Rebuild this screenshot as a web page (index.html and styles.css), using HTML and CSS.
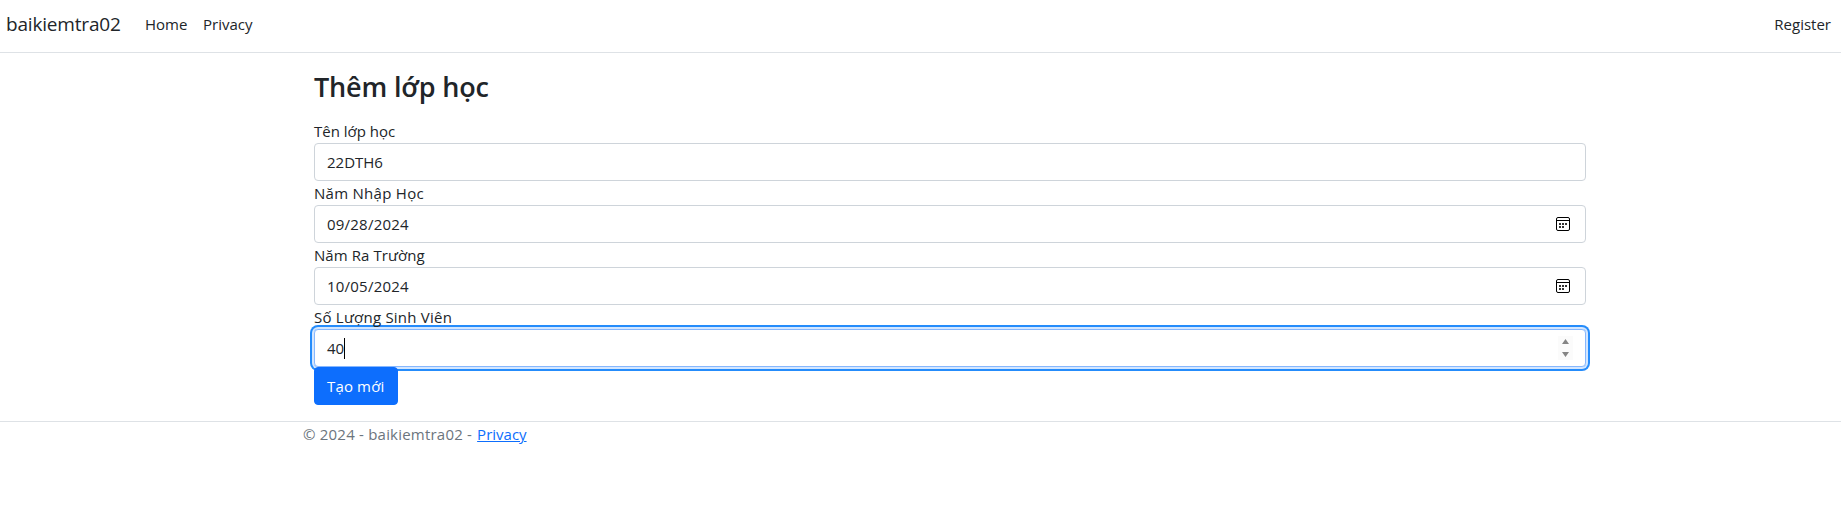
FILE: index.html
```html
<!DOCTYPE html>
<html lang="vi">
<head>
<meta charset="utf-8">
<title>Thêm lớp học - baikiemtra02</title>
<link rel="stylesheet" href="styles.css">
</head>
<body>
<header class="navbar">
  <a class="brand">baikiemtra02</a>
  <nav class="links"><a class="home">Home</a><a class="privacy">Privacy</a></nav>
  <a class="register">Register</a>
</header>
<main class="container">
  <h1 class="title">Thêm lớp học</h1>
  <form class="form">
    <label class="label l1">Tên lớp học</label>
    <div class="control"><span class="v1">22DTH6</span></div>
    <label class="label l2">Năm Nhập Học</label>
    <div class="control"><span class="date">09/28/2024</span>
      <svg class="calendar" width="14" height="14" viewBox="0 0 14 14"><rect x=".5" y=".5" width="13" height="13" rx="1.5" fill="none" stroke="#000"/><path d="M1 3.500h12" stroke="#000"/><path d="M3 6h2v2H3zM6 6h2v2H6zM9 6h2v2H9zM3 9h2v2H3zM6 9h2v2H6z" fill="#333"/></svg>
    </div>
    <label class="label l3">Năm Ra Trường</label>
    <div class="control"><span class="date">10/05/2024</span>
      <svg class="calendar" width="14" height="14" viewBox="0 0 14 14"><rect x=".5" y=".5" width="13" height="13" rx="1.5" fill="none" stroke="#000"/><path d="M1 3.500h12" stroke="#000"/><path d="M3 6h2v2H3zM6 6h2v2H6zM9 6h2v2H9zM3 9h2v2H3zM6 9h2v2H6z" fill="#333"/></svg>
    </div>
    <label class="label l4">Số Lượng Sinh Viên</label>
    <div class="control focused"><span class="v4">40</span><i class="caret"></i>
      <svg class="spinner" width="15" height="24" viewBox="0 0 15 24"><path fill="#fbfbfb" d="M0 0h15v24H0z"/><path d="M7.500 3L11 8H4zM7.500 21L11 16H4z" fill="#858585"/></svg>
    </div>
    <button class="submit" type="button"><span>Tạo mới</span></button>
  </form>
</main>
<footer class="footer">
  <div class="footer-inner"><span class="copy">© 2024 - baikiemtra02 -</span><a class="footer-link">Privacy</a></div>
</footer>
</body>
</html>
```
FILE: styles.css
```css
* { box-sizing: border-box; }
body {
  margin: 0;
  background: #fff;
  color: #212529;
  font: 15px/24px "Open Sans", "Noto Sans", sans-serif;
}
.navbar {
  display: flex;
  align-items: center;
  height: 53px;
  padding: 0 10px 4px 6px;
  border-bottom: 1px solid #dee2e6;
}
.brand { width: 139px; font-size: 19px; line-height: 30px; letter-spacing: -.18px; }
.links { display: flex; flex: 1; }
.home { width: 58px; }
.container { width: 1296px; margin: 0 0 0 302px; padding: 0 12px; }
.title {
  margin: 0;
  padding-top: 16px;
  height: 66px;
  font-size: 27px;
  line-height: 36px;
  font-weight: 600;
  letter-spacing: -.15px;
}
.label { display: block; height: 24px; white-space: nowrap; }
.l2 { letter-spacing: .28px; }
.l3 { letter-spacing: .08px; }
.l4 { letter-spacing: .23px; }
.date { letter-spacing: .22px; }
.control {
  display: flex;
  align-items: center;
  height: 38px;
  padding: 0 15px 0 12px;
  border: 1px solid #ced4da;
  border-radius: 4px;
}
.calendar { margin-left: auto; }
.focused {
  padding-right: 12px;
  border-color: #86b7fe;
  box-shadow: 0 0 0 2px #d3e6ff, 0 0 0 4px #258cfb;
}
.caret { width: 1px; height: 21px; background: #000; }
.spinner { margin-left: auto; }
.submit {
  display: block;
  position: relative;
  width: 84px;
  height: 38px;
  padding: 0 0 0 12px;
  border: 1px solid #0d6efd;
  border-radius: 4px;
  background: #0d6efd;
  color: #fff;
  font: inherit;
  letter-spacing: .15px;
  text-align: left;
  white-space: nowrap;
}
.footer { margin-top: 16px; border-top: 1px solid #dee2e6; color: #6c757d; }
.footer-inner { display: flex; gap: 5px; padding-left: 303px; }
.copy { letter-spacing: .21px; }
.footer-link { color: #0d6efd; text-decoration: underline; }
```
